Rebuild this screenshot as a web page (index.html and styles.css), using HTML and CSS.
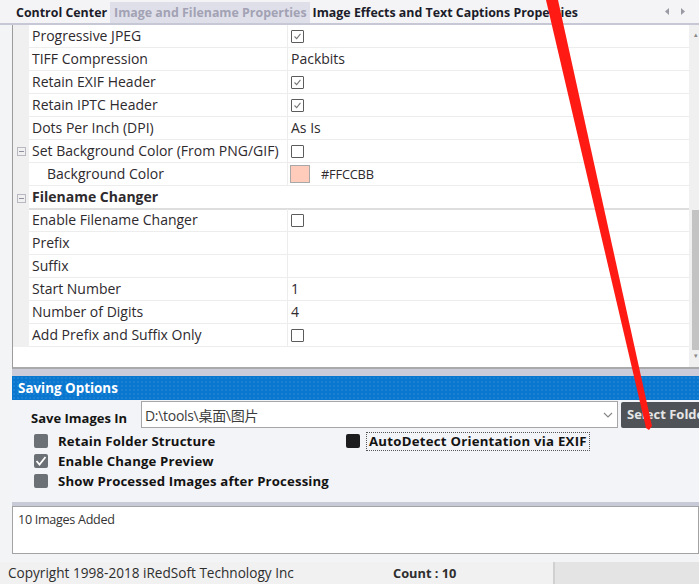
FILE: index.html
```html
<!DOCTYPE html>
<html>
<head>
<meta charset="utf-8">
<link rel="stylesheet" href="styles.css">
</head>
<body>
<div class="tabbar">
  <div class="tabs">
    <span class="tab">Control Center</span>
    <span class="tab active">Image and Filename Properties</span>
    <span class="tab">Image Effects and Text Captions Properties</span>
  </div>
  <div class="tab-arrows">
    <svg width="8" height="9" viewBox="0 0 8 9"><path d="M6 1 L2 4.5 L6 8 Z" fill="#9a9aa4"/></svg>
    <svg width="8" height="9" viewBox="0 0 8 9"><path d="M2 1 L6 4.5 L2 8 Z" fill="#9a9aa4"/></svg>
  </div>
</div>

<div class="main">
  <div class="grid-wrap">
    <div class="grid">
      <div class="row"><div class="margin"></div><div class="name">Progressive JPEG</div><div class="value"><span class="cb checked"><svg viewBox="0 0 13 13"><path d="M3 6.5 L5.5 9 L10 3.5" fill="none" stroke="#777" stroke-width="1.3"/></svg></span></div></div>
      <div class="row"><div class="margin"></div><div class="name">TIFF Compression</div><div class="value">Packbits</div></div>
      <div class="row"><div class="margin"></div><div class="name">Retain EXIF Header</div><div class="value"><span class="cb checked"><svg viewBox="0 0 13 13"><path d="M3 6.5 L5.5 9 L10 3.5" fill="none" stroke="#777" stroke-width="1.3"/></svg></span></div></div>
      <div class="row"><div class="margin"></div><div class="name">Retain IPTC Header</div><div class="value"><span class="cb checked"><svg viewBox="0 0 13 13"><path d="M3 6.5 L5.5 9 L10 3.5" fill="none" stroke="#777" stroke-width="1.3"/></svg></span></div></div>
      <div class="row"><div class="margin"></div><div class="name">Dots Per Inch (DPI)</div><div class="value">As Is</div></div>
      <div class="row"><div class="margin"><span class="minus"></span></div><div class="name">Set Background Color (From PNG/GIF)</div><div class="value"><span class="cb"></span></div></div>
      <div class="row"><div class="margin"></div><div class="name sub">Background Color</div><div class="value"><span class="swatch"></span><span class="hex">#FFCCBB</span></div></div>
      <div class="row cat"><div class="margin"><span class="minus"></span></div><div class="name">Filename Changer</div></div>
      <div class="row"><div class="margin"></div><div class="name">Enable Filename Changer</div><div class="value"><span class="cb"></span></div></div>
      <div class="row"><div class="margin"></div><div class="name">Prefix</div><div class="value"></div></div>
      <div class="row"><div class="margin"></div><div class="name">Suffix</div><div class="value"></div></div>
      <div class="row"><div class="margin"></div><div class="name">Start Number</div><div class="value">1</div></div>
      <div class="row"><div class="margin"></div><div class="name">Number of Digits</div><div class="value">4</div></div>
      <div class="row"><div class="margin"></div><div class="name">Add Prefix and Suffix Only</div><div class="value"><span class="cb"></span></div></div>
    </div>
    <div class="vscroll">
      <span class="sarrow">&#9652;</span>
      <div class="thumb"></div>
      <span class="sarrow">&#9662;</span>
    </div>
  </div>
  <div class="splitter"></div>
  <div class="saving-head">Saving Options</div>
  <div class="saving-body">
    <div class="save-row">
      <div class="save-label">Save Images In</div>
      <div class="combo"><span class="combo-text">D:\tools\桌面\图片</span><svg class="chev" width="10" height="6" viewBox="0 0 10 6"><path d="M1 1 L5 5 L9 1" fill="none" stroke="#888" stroke-width="1.2"/></svg></div>
      <div class="btn">Select Folder</div>
    </div>
    <div class="opts">
      <div class="opt"><span class="box"></span><span class="opt-label">Retain Folder Structure</span></div>
      <div class="opt"><span class="box dark"></span><span class="opt-label focus">AutoDetect Orientation via EXIF</span></div>
      <div class="opt"><span class="box"><svg viewBox="0 0 14 14"><path d="M2.5 7 L5.5 10.5 L11.5 3" fill="none" stroke="#fff" stroke-width="1.8"/></svg></span><span class="opt-label">Enable Change Preview</span></div>
      <div class="opt"></div>
      <div class="opt"><span class="box"></span><span class="opt-label">Show Processed Images after Processing</span></div>
    </div>
  </div>
  <div class="splitter2"></div>
  <div class="log">10 Images Added</div>
</div>

<div class="status">
  <div class="st-left">Copyright 1998-2018 iRedSoft Technology Inc</div>
  <div class="st-count">Count : 10</div>
  <div class="st-right"></div>
</div>

<svg class="pointer" width="699" height="584" viewBox="0 0 699 584"><polygon points="546,0 558,0 652,426 649,430 646,428" fill="#ff1a14"/></svg>
</body>
</html>
```

FILE: styles.css
```css
html, body {
  margin: 0;
  padding: 0;
}
body {
  width: 699px;
  height: 584px;
  overflow: hidden;
  position: relative;
  background: #f3f4f6;
  font-family: "Open Sans", "Noto Sans CJK SC", sans-serif;
  color: #2e2a2e;
}

/* tab strip */
.tabbar {
  height: 23px;
  border-bottom: 2px solid #c7c8d6;
  display: flex;
  align-items: flex-end;
  justify-content: space-between;
  background: #f4f4f6;
}
.tabs {
  display: flex;
  padding-left: 13px;
}
.tab {
  font-weight: 700;
  font-size: 12.4px;
  color: #1c1c2a;
  height: 21px;
  line-height: 21px;
  padding: 0 3px;
  white-space: nowrap;
}
.tab.active {
  background: #dfdfe9;
  color: #a2a2b4;
  padding: 0 3px 0 4px;
}
.tab-arrows {
  display: flex;
  gap: 8px;
  padding-right: 12px;
  align-self: center;
}

/* main */
.main {
  padding-left: 12px;
  display: flex;
  flex-direction: column;
}
.grid-wrap {
  height: 342px;
  display: flex;
  background: #fff;
  border-left: 1px solid #9c9c9c;
  border-bottom: 2px solid #aaaaaa;
}
.grid {
  flex: 1;
  display: flex;
  flex-direction: column;
}
.row {
  display: grid;
  grid-template-columns: 16px 258px 1fr;
  height: 23px;
  font-size: 14px;
  line-height: 22px;
}
.margin {
  background: #f0f0f0;
  display: flex;
  align-items: center;
  justify-content: center;
}
.name {
  padding-left: 3px;
  border-bottom: 1px solid #ededed;
  white-space: nowrap;
}
.name.sub {
  padding-left: 18px;
}
.value {
  border-left: 1px solid #ededed;
  border-bottom: 1px solid #ededed;
  padding-left: 3px;
  display: flex;
  align-items: center;
}
.row.cat {
  grid-template-columns: 16px 1fr;
}
.row.cat .name {
  font-weight: 700;
  border-bottom: 2px solid #dedede;
}
.minus {
  width: 7px;
  height: 7px;
  border: 1px solid #b8b8c0;
  position: relative;
  margin-left: 1px;
}
.minus::after {
  content: "";
  position: absolute;
  left: 1px;
  right: 1px;
  top: 3px;
  height: 1px;
  background: #9090a0;
}
.cb {
  width: 11px;
  height: 11px;
  border: 1.5px solid #5c5c5c;
  background: #fff;
  display: inline-block;
  border-radius: 1px;
}
.cb svg {
  display: block;
  width: 11px;
  height: 11px;
}
.swatch {
  width: 20px;
  height: 18px;
  background: #ffccbb;
  border: 1px solid #a8a8a8;
  box-sizing: border-box;
  margin-left: -1px;
}
.hex {
  margin-left: 11px;
  font-size: 12.8px;
  letter-spacing: -0.2px;
}
.vscroll {
  width: 10px;
  background: #f0f0f0;
  display: flex;
  flex-direction: column;
  align-items: flex-end;
}
.sarrow {
  font-size: 7px;
  color: #888;
  line-height: 10px;
  width: 7px;
  text-align: center;
}
.sarrow:first-child {
  margin-top: 5px;
}
.thumb {
  width: 7px;
  height: 140px;
  background: #c3c3c3;
  margin-top: 170px;
}
.vscroll .sarrow:last-child {
  margin-top: auto;
  margin-bottom: 6px;
}

.splitter {
  height: 7px;
  background: #cbcbd9;
}
.saving-head {
  height: 24px;
  line-height: 24px;
  background-color: #0977d0;
  background-image: radial-gradient(circle, rgba(255,255,255,0.07) 1px, transparent 1.2px);
  background-size: 4px 4px;
  color: #fff;
  font-weight: 700;
  font-size: 13.4px;
  padding-left: 6px;
}
.saving-body {
  height: 102px;
  background: #f3f4f7;
}
.save-row {
  display: flex;
  height: 27px;
  margin-top: 1px;
  overflow: hidden;
}
.save-label {
  flex-shrink: 0;
  width: 129px;
  box-sizing: border-box;
  padding-left: 19px;
  font-weight: 700;
  font-size: 13px;
  color: #141414;
  align-self: flex-end;
  line-height: 20px;
  white-space: nowrap;
}
.combo {
  width: 468px;
  height: 25px;
  border: 1px solid #a6a6a6;
  background: #fff;
  display: flex;
  align-items: center;
  justify-content: space-between;
  padding: 0 4px 0 3px;
  flex-shrink: 0;
}
.combo-text {
  font-size: 14px;
  color: #3c3c3c;
  letter-spacing: -0.3px;
}
.btn {
  flex-shrink: 0;
  margin-left: 3px;
  width: 96px;
  height: 26px;
  margin-top: 1px;
  background: #4f5357;
  color: #e6e6e6;
  font-weight: 700;
  font-size: 13px;
  line-height: 25px;
  padding-left: 6px;
  border-radius: 2px;
}
.opts {
  display: grid;
  grid-template-columns: 312px 1fr;
  padding-left: 22px;
  margin-top: 3px;
}
.opt {
  height: 20px;
  display: flex;
  align-items: center;
}
.box {
  width: 14px;
  height: 14px;
  border-radius: 2px;
  background: #6b6f76;
  flex-shrink: 0;
}
.box svg {
  display: block;
  width: 14px;
  height: 14px;
}
.box.dark {
  background: #1c1c1e;
}
.opt-label {
  margin-left: 10px;
  font-weight: 700;
  font-size: 13.2px;
  letter-spacing: 0.15px;
  color: #131313;
  white-space: nowrap;
}
.opt-label.focus {
  margin-left: 6px;
  padding: 0 2px;
  border: 1px dotted #555;
  line-height: 17px;
  letter-spacing: 0.25px;
}

.splitter2 {
  height: 4px;
  background: #c9cad7;
}
.log {
  background: #fff;
  border: 1px solid #a3a3a3;
  font-size: 12.6px;
  letter-spacing: -0.3px;
  color: #333;
  padding: 4px 5px;
  box-sizing: border-box;
  height: 48px;
}

.status {
  position: absolute;
  left: 0;
  right: 0;
  bottom: 0;
  height: 22px;
  display: flex;
  background: #f1f1f1;
  font-size: 13.6px;
  line-height: 22px;
  color: #2e2e2e;
}
.st-left {
  width: 385px;
  padding-left: 8px;
  box-sizing: border-box;
  white-space: nowrap;
}
.st-count {
  width: 168px;
  font-weight: 700;
  font-size: 12.8px;
  padding-left: 8px;
  box-sizing: border-box;
}
.st-right {
  flex: 1;
  background: #e4e4e4;
  border-left: 2px solid #d0d0d0;
}

.pointer {
  position: absolute;
  left: 0;
  top: 0;
  pointer-events: none;
}
```
